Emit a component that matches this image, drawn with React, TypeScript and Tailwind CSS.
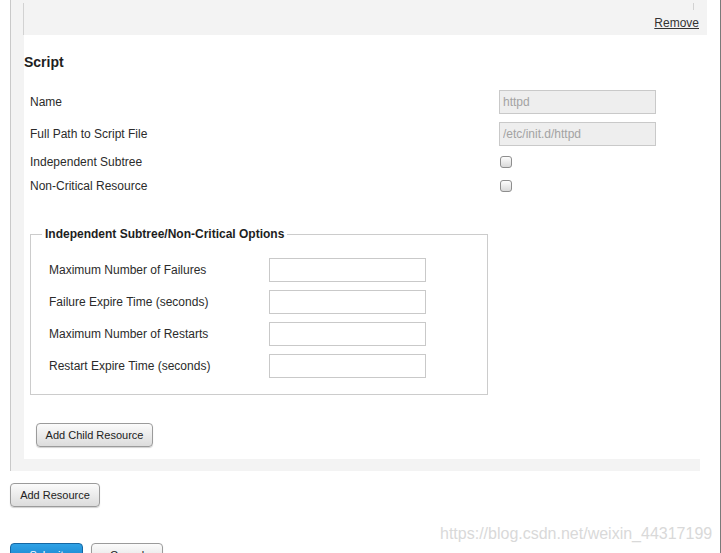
import React from "react";

function Btn({ children, className = "" }: { children: React.ReactNode; className?: string }) {
  return (
    <button
      type="button"
      className={
        "block h-[24px] rounded-[4px] border border-[#9b9b9b] bg-linear-to-b from-[#fbfbfb] to-[#dcdcdc] text-[11px] leading-[14px] text-[#222] shadow-[0_1px_1px_rgba(0,0,0,0.18)] " +
        className
      }
    >
      {children}
    </button>
  );
}

function Row({ label, children, h = "h-[24px]" }: { label: string; children: React.ReactNode; h?: string }) {
  return (
    <div className={"flex items-center " + h}>
      <div className="w-[469px] shrink-0">{label}</div>
      {children}
    </div>
  );
}

function DisabledInput({ value }: { value: string }) {
  return (
    <input
      disabled
      readOnly
      value={value}
      className="block w-[157px] h-[24px] border border-[#c9c9c9] bg-[#eeeeee] pl-[3px] text-[12px] text-[#a3a3a3] outline-none"
    />
  );
}

function Checkbox() {
  return (
    <input
      type="checkbox"
      className="block ml-[1px] w-[12px] h-[12px] appearance-none rounded-[3px] border border-[#8e8e8e] bg-linear-to-b from-[#fdfdfd] to-[#d9d9d9]"
    />
  );
}

function OptRow({ label }: { label: string }) {
  return (
    <div className="flex items-center h-[24px]">
      <div className="w-[220px] shrink-0">{label}</div>
      <input className="block w-[157px] h-[24px] border border-[#c9c9c9] bg-white outline-none" />
    </div>
  );
}

export default function App() {
  return (
    <div className="relative w-[721px] h-[553px] overflow-hidden bg-white border-r border-[#7a7a7a] text-[#2b2b2b] font-['Liberation_Sans',Arial,sans-serif]">
      {/* resource container */}
      <div className="ml-[10px] w-[690px] border-l border-[#c9c9c9] bg-[#f3f3f3] pb-[12px]">
        {/* top row */}
        <div className="w-[696px] h-[35px] pt-[3px] pl-[12px] bg-[#f3f3f3]">
          <div className="h-[32px] border-l border-[#d2d2d2]">
            <div className="h-[7px] w-[670px] border-r border-[#d2d2d2]" />
            <div className="pt-[6px] pr-[8px] text-right text-[12px] leading-[14px]">
              <span className="underline text-[#333]">Remove</span>
            </div>
          </div>
        </div>

        {/* white area */}
        <div className="ml-[13px] bg-white pb-[12px]">
          <h2 className="pt-[19px] text-[14px] leading-[16px] font-bold text-[#1e1e1e]">Script</h2>

          <div className="mt-[20px] pl-[6px] flex flex-col gap-[8px] text-[12px]">
            <Row label="Name">
              <DisabledInput value="httpd" />
            </Row>
            <Row label="Full Path to Script File">
              <DisabledInput value="/etc/init.d/httpd" />
            </Row>
            <Row label="Independent Subtree" h="h-[16px]">
              <Checkbox />
            </Row>
            <Row label="Non-Critical Resource" h="h-[16px]">
              <Checkbox />
            </Row>
          </div>

          <fieldset className="mt-[33px] ml-[6px] w-[458px] border border-[#cccccc] p-0">
            <legend className="ml-[11px] px-[3px] text-[12px] leading-[14px] font-bold text-[#1e1e1e]">
              Independent Subtree/Non-Critical Options
            </legend>
            <div className="pl-[18px] pt-[17px] pb-[16px] flex flex-col gap-[8px] text-[12px]">
              <OptRow label="Maximum Number of Failures" />
              <OptRow label="Failure Expire Time (seconds)" />
              <OptRow label="Maximum Number of Restarts" />
              <OptRow label="Restart Expire Time (seconds)" />
            </div>
          </fieldset>

          <Btn className="mt-[28px] ml-[12px] w-[117px]">Add Child Resource</Btn>
        </div>
      </div>

      <Btn className="mt-[12px] ml-[10px] w-[90px]">Add Resource</Btn>

      <div className="mt-[36px] ml-[10px] flex gap-[8px]">
        <button
          type="button"
          className="block w-[73px] h-[24px] rounded-[4px] border border-[#1567a3] bg-linear-to-b from-[#2fa2e6] to-[#0b78c2] text-[11px] leading-[14px] text-white"
        >
          Submit
        </button>
        <Btn className="w-[72px]">Cancel</Btn>
      </div>

      <div className="absolute left-[440px] top-[525px] text-[16px] leading-[18px] text-[#d9d9d9] whitespace-nowrap">
        https://blog.csdn.net/weixin_44317199
      </div>
    </div>
  );
}
